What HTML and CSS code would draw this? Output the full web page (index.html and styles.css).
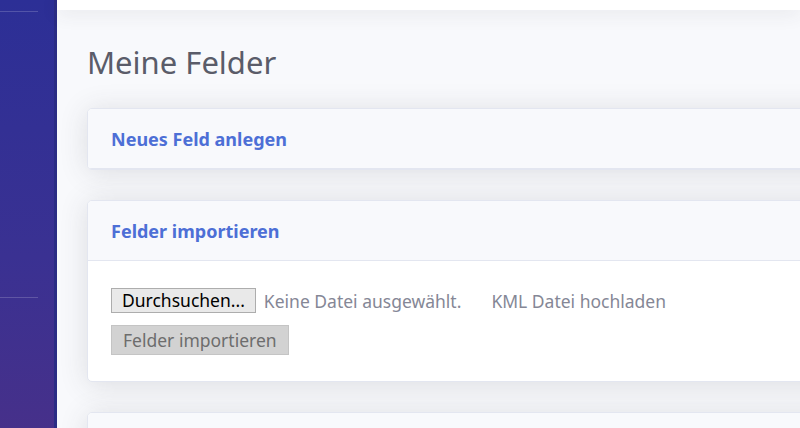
FILE: index.html
```html
<!DOCTYPE html>
<html lang="de">
<head>
  <meta charset="UTF-8" />
  <title>Meine Felder</title>
  <meta name="viewport" content="width=device-width,initial-scale=1" />
  <link rel="stylesheet" href="styles.css">
</head>
<body>
  <div class="wrapper">
    <nav class="sidebar">
      <hr class="sidebar-divider top">
      <hr class="sidebar-divider mid">
    </nav>

    <div class="content">
      <div class="topbar"></div>

      <div class="page">
        <h1 class="page-title">Meine Felder</h1>

        <div class="card">
          <div class="card-header">
            <h6>Neues Feld anlegen</h6>
          </div>
        </div>

        <div class="card">
          <div class="card-header">
            <h6>Felder importieren</h6>
          </div>
          <div class="card-body">
            <div class="file-row">
              <button class="btn-file">Durchsuchen...</button>
              <span class="file-name">Keine Datei ausgewählt.</span>
              <span class="file-hint">KML Datei hochladen</span>
            </div>
            <button class="btn-import" disabled>Felder importieren</button>
          </div>
        </div>

        <div class="card">
          <div class="card-header"></div>
        </div>
      </div>
    </div>
  </div>
</body>
</html>
```

FILE: styles.css
```css
html, body {
  margin: 0;
  height: 100%;
  overflow: hidden;
}
body {
  font-family: "Noto Sans", "Open Sans", sans-serif;
  background-color: #f8f9fc;
  color: #858796;
}
.wrapper {
  display: flex;
  height: 100%;
}
.sidebar {
  width: 54px;
  flex-shrink: 0;
  background: linear-gradient(180deg, #2c2f96 0%, #3a3192 60%, #46308a 100%);
  border-right: 3px solid #2a2c84;
  display: flex;
  flex-direction: column;
}
.sidebar-divider {
  width: 38px;
  margin: 0;
  border: 0;
  border-top: 1px solid rgba(255, 255, 255, .18);
}
.sidebar-divider.top {
  margin-top: 11px;
}
.sidebar-divider.mid {
  margin-top: 285px;
}
.content {
  flex: 1;
  min-width: 0;
}
.topbar {
  height: 10px;
  background: #fff;
  box-shadow: 0 .15rem 1.2rem rgba(58, 59, 69, .12);
  position: relative;
}
.page {
  padding: 0 0 0 30px;
  margin-right: -60px;
}
.page-title {
  margin: 32px 0 26px;
  font-weight: 400;
  font-size: 31px;
  line-height: 40px;
  color: #5a5c69;
}
.card {
  background: #fff;
  border: 1px solid #e3e6f0;
  border-radius: 5px;
  box-shadow: 0 .15rem 1.75rem rgba(58, 59, 69, .15);
  margin-bottom: 30px;
  overflow: hidden;
}
.card-header {
  background: #f8f9fc;
  border-bottom: 1px solid #e3e6f0;
  height: 59px;
  display: flex;
  align-items: center;
  padding: 0 23px;
}
.card-header h6 {
  margin: 0;
  font-size: 18px;
  font-weight: 700;
  color: #4d6fd6;
}
.card-body {
  padding: 27px 23px 26px;
}
.file-row {
  display: flex;
  align-items: center;
  margin-bottom: 12px;
}
.btn-file, .btn-import {
  font-family: inherit;
  font-size: 17.5px;
  line-height: 21px;
  border-radius: 0;
  padding: 1px 10px;
}
.btn-file {
  background: #e9e9e9;
  border: 1px solid #adadad;
  color: #000;
}
.file-name {
  margin-left: 8px;
  font-size: 17.5px;
}
.file-hint {
  margin-left: 30px;
  font-size: 17.5px;
}
.btn-import {
  background: #d2d2d2;
  border: 1px solid #c4c4c4;
  color: #6d6d6d;
  line-height: 20px;
  padding: 4px 11px;
}
```
